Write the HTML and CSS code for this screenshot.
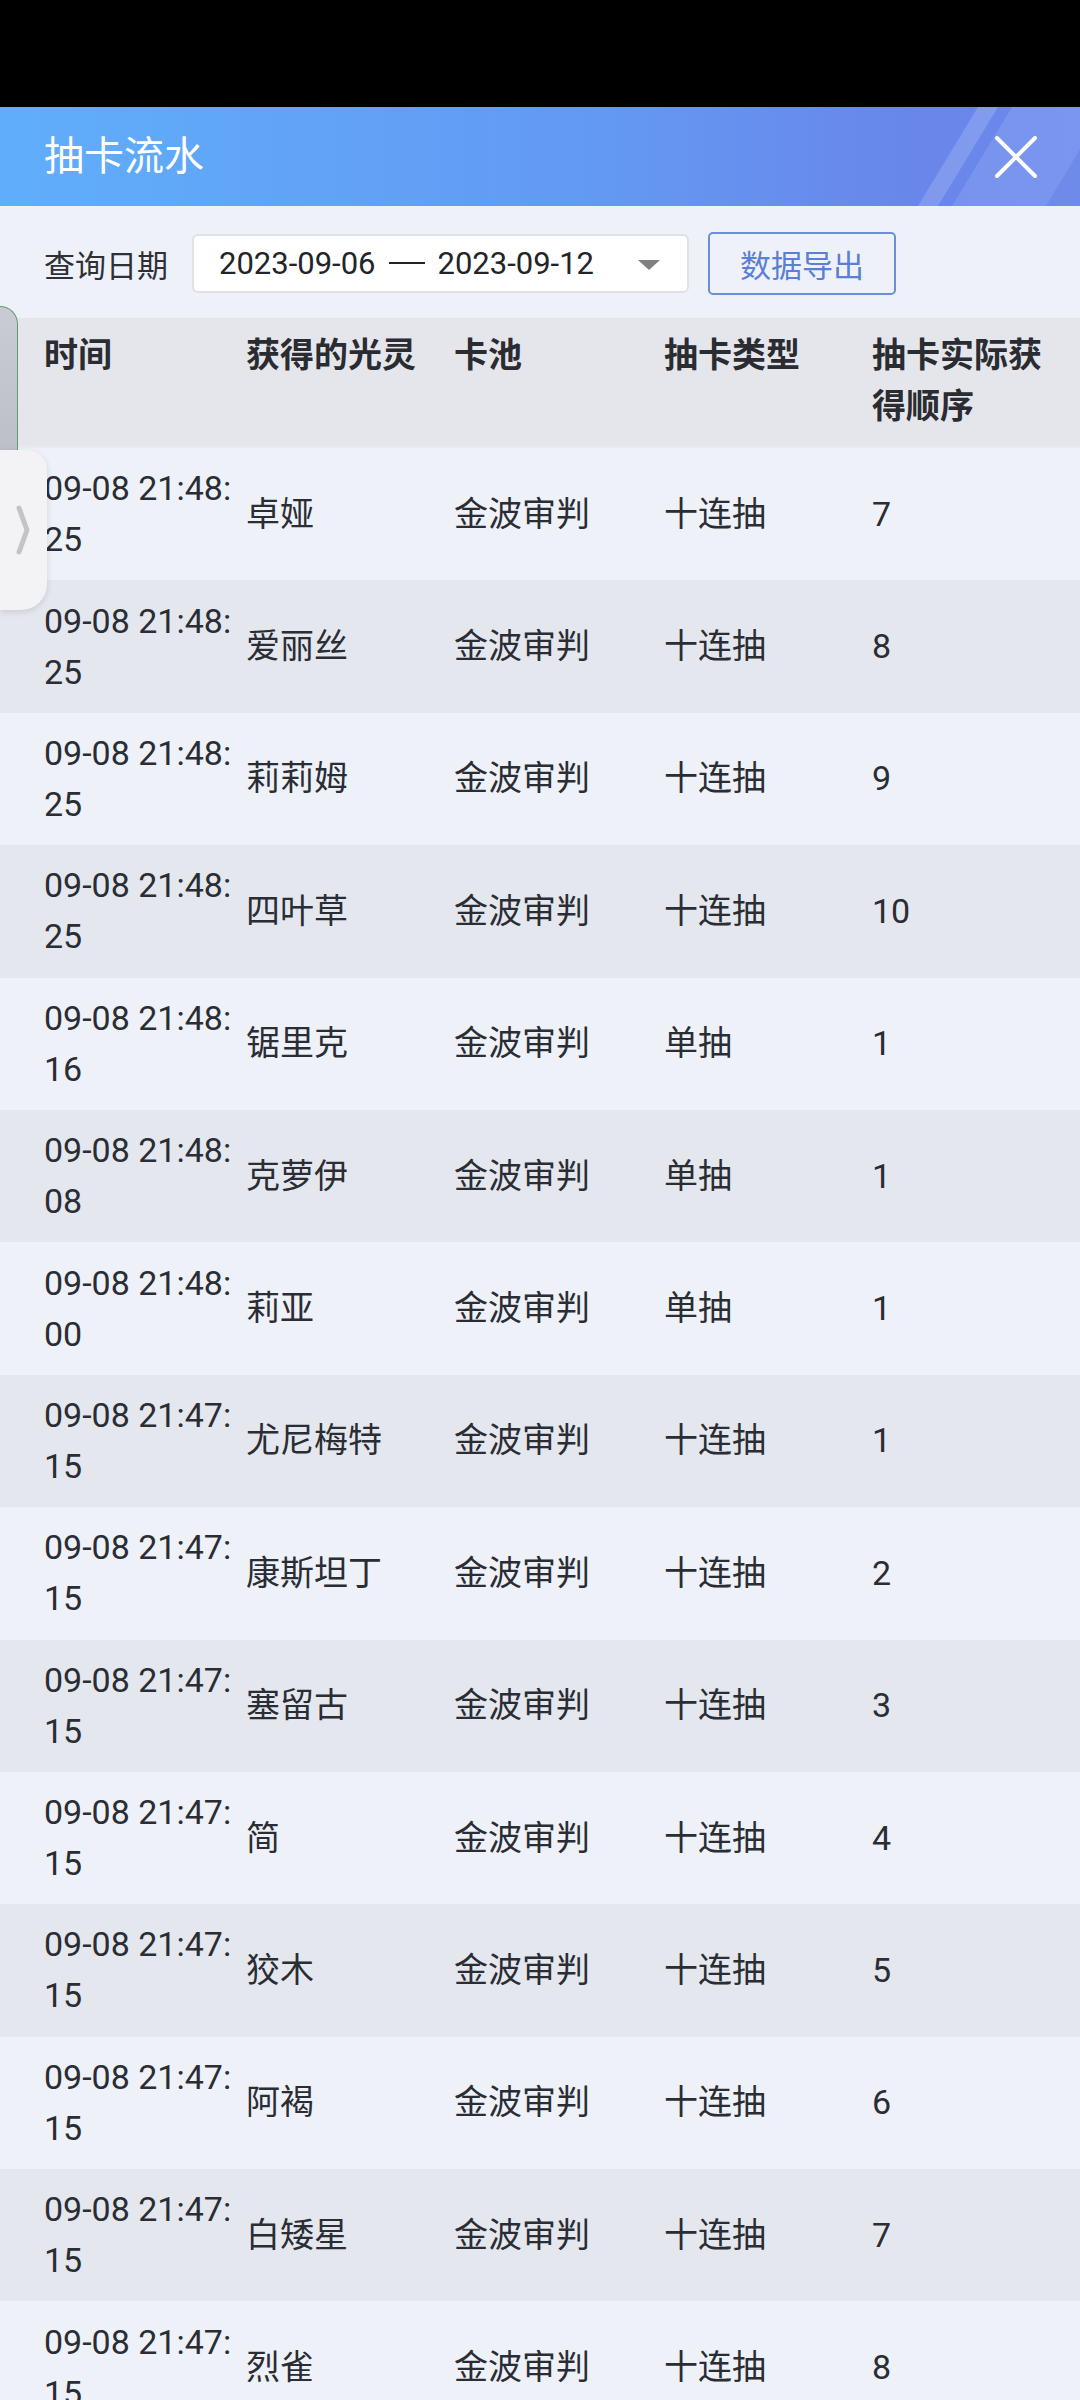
FILE: index.html
```html
<!DOCTYPE html>
<html lang="zh-CN">
<head>
<meta charset="utf-8">
<title>抽卡流水</title>
<link rel="stylesheet" href="styles.css">
</head>
<body>
<div class="page">
  <div class="statusbar"></div>
  <header class="header">
    <svg class="stripes" width="1080" height="99" viewBox="0 0 1080 99">
      <polygon points="918,99 978,0 998,0 938,99" fill="#ffffff" fill-opacity="0.16"/>
      <polygon points="952,99 1012,0 1080,0 1080,99" fill="#ffffff" fill-opacity="0.10"/>
      <polygon points="1046,99 1080,42 1080,99" fill="#5b78e0" fill-opacity="0.35"/>
    </svg>
    <h1 class="title">抽卡流水</h1>
    <svg class="close" width="42" height="42" viewBox="0 0 42 42">
      <path d="M2 2 L40 40 M40 2 L2 40" stroke="#ffffff" stroke-width="4" stroke-linecap="round" fill="none"/>
    </svg>
  </header>
  <div class="filter">
    <span class="label">查询日期</span>
    <div class="datebox">
      <span class="date">2023-09-06</span>
      <span class="dash"></span>
      <span class="date">2023-09-12</span>
      <span class="caret"></span>
    </div>
    <button class="export">数据导出</button>
  </div>
  <div class="table">
    <div class="row head">
      <div class="cell">时间</div>
      <div class="cell">获得的光灵</div>
      <div class="cell">卡池</div>
      <div class="cell">抽卡类型</div>
      <div class="cell">抽卡实际获得顺序</div>
    </div>
    <div class="row"><div class="cell time">09-08 21:48:25</div><div class="cell">卓娅</div><div class="cell">金波审判</div><div class="cell">十连抽</div><div class="cell">7</div></div>
    <div class="row alt"><div class="cell time">09-08 21:48:25</div><div class="cell">爱丽丝</div><div class="cell">金波审判</div><div class="cell">十连抽</div><div class="cell">8</div></div>
    <div class="row"><div class="cell time">09-08 21:48:25</div><div class="cell">莉莉姆</div><div class="cell">金波审判</div><div class="cell">十连抽</div><div class="cell">9</div></div>
    <div class="row alt"><div class="cell time">09-08 21:48:25</div><div class="cell">四叶草</div><div class="cell">金波审判</div><div class="cell">十连抽</div><div class="cell">10</div></div>
    <div class="row"><div class="cell time">09-08 21:48:16</div><div class="cell">锯里克</div><div class="cell">金波审判</div><div class="cell">单抽</div><div class="cell">1</div></div>
    <div class="row alt"><div class="cell time">09-08 21:48:08</div><div class="cell">克萝伊</div><div class="cell">金波审判</div><div class="cell">单抽</div><div class="cell">1</div></div>
    <div class="row"><div class="cell time">09-08 21:48:00</div><div class="cell">莉亚</div><div class="cell">金波审判</div><div class="cell">单抽</div><div class="cell">1</div></div>
    <div class="row alt"><div class="cell time">09-08 21:47:15</div><div class="cell">尤尼梅特</div><div class="cell">金波审判</div><div class="cell">十连抽</div><div class="cell">1</div></div>
    <div class="row"><div class="cell time">09-08 21:47:15</div><div class="cell">康斯坦丁</div><div class="cell">金波审判</div><div class="cell">十连抽</div><div class="cell">2</div></div>
    <div class="row alt"><div class="cell time">09-08 21:47:15</div><div class="cell">塞留古</div><div class="cell">金波审判</div><div class="cell">十连抽</div><div class="cell">3</div></div>
    <div class="row"><div class="cell time">09-08 21:47:15</div><div class="cell">简</div><div class="cell">金波审判</div><div class="cell">十连抽</div><div class="cell">4</div></div>
    <div class="row alt"><div class="cell time">09-08 21:47:15</div><div class="cell">狡木</div><div class="cell">金波审判</div><div class="cell">十连抽</div><div class="cell">5</div></div>
    <div class="row"><div class="cell time">09-08 21:47:15</div><div class="cell">阿褐</div><div class="cell">金波审判</div><div class="cell">十连抽</div><div class="cell">6</div></div>
    <div class="row alt"><div class="cell time">09-08 21:47:15</div><div class="cell">白矮星</div><div class="cell">金波审判</div><div class="cell">十连抽</div><div class="cell">7</div></div>
    <div class="row"><div class="cell time">09-08 21:47:15</div><div class="cell">烈雀</div><div class="cell">金波审判</div><div class="cell">十连抽</div><div class="cell">8</div></div>
  </div>
  <div class="side-ghost"></div>
  <div class="side-tab">
    <svg width="14" height="50" viewBox="0 0 14 50">
      <polyline points="3,3 11,25 3,47" fill="none" stroke="#c4c4c6" stroke-width="5" stroke-linecap="round" stroke-linejoin="round"/>
    </svg>
  </div>
</div>
</body>
</html>
```
FILE: styles.css
```css
html, body {
  margin: 0;
  padding: 0;
}
body {
  width: 1080px;
  height: 2400px;
  overflow: hidden;
  background: #eff1f8;
  font-family: Roboto, "Noto Sans CJK SC", sans-serif;
  color: #2a2d34;
}
.page {
  position: relative;
  width: 1080px;
  height: 2400px;
  overflow: hidden;
}
.statusbar {
  height: 107px;
  background: #000;
}
.header {
  position: relative;
  height: 99px;
  display: flex;
  align-items: center;
  justify-content: space-between;
  padding: 0 43px 0 44px;
  background: linear-gradient(90deg, #60aefb 0%, #6399f3 55%, #6986ea 85%, #6b8bec 100%);
  overflow: hidden;
}
.stripes {
  position: absolute;
  left: 0;
  top: 0;
}
.title {
  position: relative;
  margin: 0;
  font-size: 40px;
  font-weight: 400;
  color: #fff;
  line-height: 1;
}
.close {
  position: relative;
}
.filter {
  height: 112px;
  display: flex;
  align-items: center;
  padding-left: 44px;
  box-sizing: border-box;
  padding-top: 2px;
}
.label {
  font-size: 31px;
  color: #2e3036;
  margin-right: 24px;
}
.datebox {
  width: 497px;
  height: 59px;
  box-sizing: border-box;
  background: #fff;
  border: 2px solid #dfe1e6;
  border-radius: 6px;
  display: flex;
  align-items: center;
  padding-left: 25px;
  font-size: 31px;
  color: #222429;
}
.dash {
  width: 36px;
  height: 2px;
  background: #222429;
  margin: 0 13px;
}
.caret {
  width: 0;
  height: 0;
  border-left: 11px solid transparent;
  border-right: 11px solid transparent;
  border-top: 10px solid #808080;
  margin-left: 44px;
  margin-top: 4px;
}
.export {
  margin-left: 19px;
  width: 188px;
  height: 63px;
  box-sizing: border-box;
  border: 2px solid #6b8ed8;
  border-radius: 5px;
  background: #eff1f9;
  color: #5a7fd5;
  font-family: Roboto, "Noto Sans CJK SC", sans-serif;
  font-size: 31px;
  padding: 0;
}
.table {
  display: flex;
  flex-direction: column;
}
.row {
  display: grid;
  grid-template-columns: 202px 208px 210px 208px 1fr;
  align-items: center;
  padding-left: 44px;
  height: 132.4px;
  box-sizing: border-box;
  font-size: 34px;
  line-height: 51px;
  background: #eff1f8;
}
.row.alt {
  background: #e5e7ee;
}
.row.head {
  height: 130px;
  align-items: start;
  padding-top: 12px;
  background: #e4e6ec;
  font-weight: 700;
  color: #2a2c31;
  border-bottom: 2px solid #e9ebf0;
}
.row.head .cell:last-child {
  width: 175px;
}
.cell {
  min-width: 0;
}
.time {
  word-break: break-all;
}
.side-ghost {
  position: absolute;
  left: 0;
  top: 306px;
  width: 18px;
  height: 150px;
  box-sizing: border-box;
  border: 1.5px solid #5f9c70;
  border-left: none;
  border-bottom: none;
  border-top-right-radius: 18px;
  background: linear-gradient(180deg, #c9ccd3 0%, #bcbfc6 100%);
}
.side-tab {
  position: absolute;
  left: 0;
  top: 450px;
  width: 47px;
  height: 160px;
  background: #f3f3f5;
  border-radius: 0 20px 26px 0;
  box-shadow: 0 2px 6px rgba(0, 0, 0, 0.12);
  display: flex;
  align-items: center;
  justify-content: flex-end;
  padding-right: 17px;
  box-sizing: border-box;
}
```
